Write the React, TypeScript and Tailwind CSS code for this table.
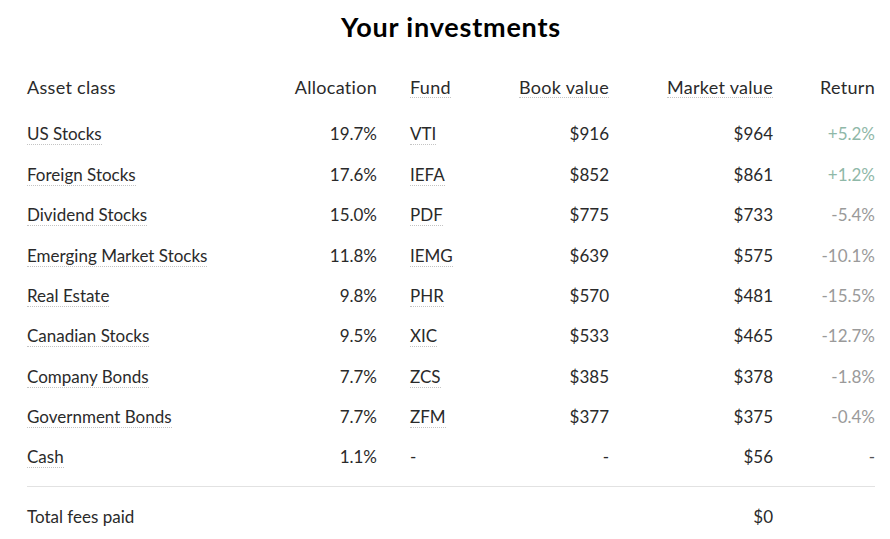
const rows = [
  { name: "US Stocks", alloc: "19.7%", fund: "VTI", book: "$916", market: "$964", ret: "+5.2%" },
  { name: "Foreign Stocks", alloc: "17.6%", fund: "IEFA", book: "$852", market: "$861", ret: "+1.2%" },
  { name: "Dividend Stocks", alloc: "15.0%", fund: "PDF", book: "$775", market: "$733", ret: "-5.4%" },
  { name: "Emerging Market Stocks", alloc: "11.8%", fund: "IEMG", book: "$639", market: "$575", ret: "-10.1%" },
  { name: "Real Estate", alloc: "9.8%", fund: "PHR", book: "$570", market: "$481", ret: "-15.5%" },
  { name: "Canadian Stocks", alloc: "9.5%", fund: "XIC", book: "$533", market: "$465", ret: "-12.7%" },
  { name: "Company Bonds", alloc: "7.7%", fund: "ZCS", book: "$385", market: "$378", ret: "-1.8%" },
  { name: "Government Bonds", alloc: "7.7%", fund: "ZFM", book: "$377", market: "$375", ret: "-0.4%" },
  { name: "Cash", alloc: "1.1%", fund: "-", book: "-", market: "$56", ret: "-" },
];

const grid = "grid grid-cols-[250px_100px_113px_119px_164px_102px] items-center";

function Dotted({ children }: { children: React.ReactNode }) {
  return (
    <span className="inline-block leading-[20px] border-b border-dotted border-[#c4c4c4]">
      {children}
    </span>
  );
}

function returnColor(ret: string) {
  if (ret.startsWith("+")) return "text-[#8fb8a8]";
  if (ret === "-") return "text-[#555]";
  return "text-[#9a9a9a]";
}

export default function App() {
  return (
    <div className="w-[890px] h-[539px] bg-white overflow-hidden pl-[27px] font-['Lato',sans-serif] text-[17px] text-[#2a2a2a]">
      <div className="w-[848px]">
        <h1 className="pt-[11px] text-center text-[27px] leading-[32px] font-bold tracking-[0.8px] text-black">
          Your investments
        </h1>

        <div className={`${grid} h-[40px] mt-[24px] text-[18px] tracking-[0.3px]`}>
          <div>Asset class</div>
          <div className="text-right">Allocation</div>
          <div className="pl-[33px]"><Dotted>Fund</Dotted></div>
          <div className="text-right"><Dotted>Book value</Dotted></div>
          <div className="text-right"><Dotted>Market value</Dotted></div>
          <div className="text-right">Return</div>
        </div>

        <div className="mt-[7px]">
          {rows.map((r) => (
            <div key={r.name} className={`${grid} h-[40.375px]`}>
              <div><Dotted>{r.name}</Dotted></div>
              <div className="text-right">{r.alloc}</div>
              <div className="pl-[33px]">
                {r.fund === "-" ? r.fund : <Dotted>{r.fund}</Dotted>}
              </div>
              <div className="text-right">{r.book}</div>
              <div className="text-right">{r.market}</div>
              <div className={`text-right ${returnColor(r.ret)}`}>{r.ret}</div>
            </div>
          ))}
        </div>

        <div className="mt-[9px] border-t border-[#e2e2e2]" />

        <div className={`${grid} h-[40px] mt-[9px]`}>
          <div>Total fees paid</div>
          <div />
          <div />
          <div />
          <div className="text-right">$0</div>
          <div />
        </div>
      </div>
    </div>
  );
}
